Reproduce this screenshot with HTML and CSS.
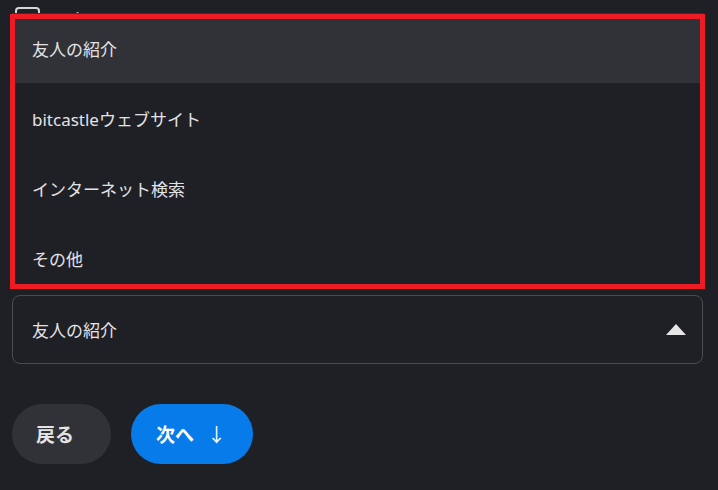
FILE: index.html
```html
<!DOCTYPE html>
<html lang="ja">
  <head>
    <meta charset="UTF-8" />
    <meta name="viewport" content="width=device-width, initial-scale=1.0" />
    <title>アンケート</title>
    <link rel="stylesheet" href="styles.css">
  </head>
  <body>
    <form class="survey">
      <label class="check-row">
        <span class="check-box"></span>
        <span class="check-text">同意</span>
      </label>

      <div class="field">
        <ul class="menu">
          <li class="menu-item selected">友人の紹介</li>
          <li class="menu-item">bitcastleウェブサイト</li>
          <li class="menu-item">インターネット検索</li>
          <li class="menu-item">その他</li>
        </ul>
        <div class="select">
          <span class="select-value">友人の紹介</span>
          <span class="select-arrow"></span>
        </div>
      </div>

      <div class="actions">
        <button type="button" class="btn btn-back">戻る</button>
        <button type="submit" class="btn btn-next">次へ <span class="arrow">↓</span></button>
      </div>
    </form>

    <div class="highlight"></div>
  </body>
</html>
```

FILE: styles.css
```css
body {
  margin: 0;
  padding: 0;
  background-color: #1f2025;
  color: #e3e3e6;
  font-family: "Noto Sans", "Noto Sans CJK JP", sans-serif;
  width: 718px;
  height: 490px;
  overflow: hidden;
}

.survey {
  display: flex;
  flex-direction: column;
  padding: 7px 15px 0 12px;
}

.check-row {
  display: flex;
  align-items: center;
  gap: 12px;
  padding-left: 3px;
  height: 25px;
  font-size: 17px;
}

.check-box {
  width: 21px;
  height: 21px;
  border: 2px solid #d6d6d9;
  border-radius: 4px;
}

.field {
  position: relative;
  margin-top: 263px;
}

.menu {
  position: absolute;
  left: 0;
  right: 0;
  bottom: 100%;
  margin: 0 0 2px 0;
  padding: 0;
  list-style: none;
  background-color: #1f2025;
}

.menu-item {
  height: 70px;
  display: flex;
  align-items: center;
  padding-left: 20px;
  font-size: 17px;
  color: #e3e3e6;
}

.menu-item.selected {
  background-color: #313237;
}

.select {
  height: 67px;
  border: 1px solid #4b4c51;
  border-radius: 8px;
  display: flex;
  align-items: center;
  justify-content: space-between;
  padding: 0 16px 0 19px;
  font-size: 17px;
}

.select-arrow {
  width: 0;
  height: 0;
  border-left: 10px solid transparent;
  border-right: 10px solid transparent;
  border-bottom: 11px solid #e6e6e8;
}

.actions {
  display: flex;
  gap: 20px;
  margin-top: 40px;
}

.btn {
  height: 60px;
  border: none;
  border-radius: 30px;
  font-family: "Noto Sans", "Noto Sans CJK JP", sans-serif;
  font-size: 19px;
  font-weight: bold;
  text-align: left;
  cursor: pointer;
}

.btn-back {
  width: 99px;
  padding: 0 0 0 24px;
  background-color: #313237;
  color: #e3e3e6;
}

.btn-next {
  width: 122px;
  padding: 0 0 0 25px;
  background-color: #077bea;
  color: #ffffff;
}

.btn-next .arrow {
  font-weight: normal;
  margin-left: 8px;
}

.highlight {
  position: absolute;
  left: 10px;
  top: 14px;
  width: 685px;
  height: 265px;
  border: 5px solid #ed1c24;
}
```
